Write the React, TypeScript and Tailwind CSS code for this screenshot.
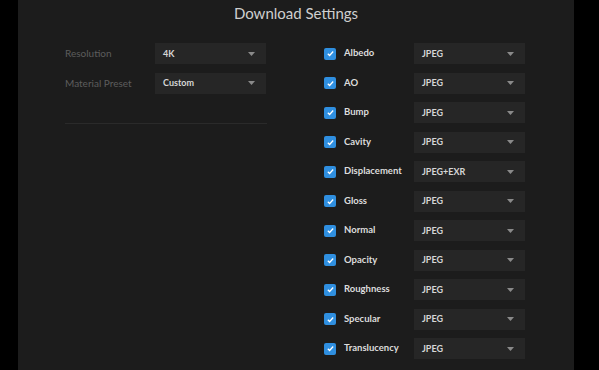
import React from "react";

const maps = [
  ["Albedo", "JPEG"],
  ["AO", "JPEG"],
  ["Bump", "JPEG"],
  ["Cavity", "JPEG"],
  ["Displacement", "JPEG+EXR"],
  ["Gloss", "JPEG"],
  ["Normal", "JPEG"],
  ["Opacity", "JPEG"],
  ["Roughness", "JPEG"],
  ["Specular", "JPEG"],
  ["Translucency", "JPEG"],
];

function Select({ value }: { value: string }) {
  return (
    <div className="flex h-[21px] w-[111px] items-center justify-between bg-[#262626] pl-[8px] pr-[11px]">
      <span className="text-[9px] font-bold text-[#d6d6d6]">{value}</span>
      <svg width="7" height="4" viewBox="0 0 7 4">
        <path d="M0 0h7L3.5 4z" fill="#8a8a8a" />
      </svg>
    </div>
  );
}

function Check() {
  return (
    <div className="flex h-[12px] w-[12px] items-center justify-center rounded-[2px] bg-[#2f8fe0]">
      <svg width="9" height="9" viewBox="0 0 10 10">
        <path d="M2 5.2l2 2 4-4.4" stroke="white" strokeWidth="1.4" fill="none" />
      </svg>
    </div>
  );
}

export default function App() {
  return (
    <div className="flex h-[370px] w-[599px] overflow-hidden bg-black" style={{ fontFamily: "Lato, 'Noto Sans', sans-serif" }}>
      <div className="ml-[18px] h-full w-[556px] bg-[#1c1c1c]">
        <h1 className="pt-[1px] text-center text-[15px] leading-[24px] text-[#cfcfcf]">Download Settings</h1>

        <div className="mt-[18px] flex">
          <div className="ml-[47px] w-[202px]">
            <div className="flex flex-col gap-[8.5px]">
              <div className="flex h-[21px] items-center">
                <span className="w-[90px] text-[10px] text-[#5c5c5c]">Resolution</span>
                <Select value="4K" />
              </div>
              <div className="flex h-[21px] items-center">
                <span className="w-[90px] text-[10px] text-[#5c5c5c]">Material Preset</span>
                <Select value="Custom" />
              </div>
            </div>
            <div className="mt-[29px] h-px w-[202px] bg-[#2a2a2a]" />
          </div>

          <div className="ml-[57px] flex flex-col gap-[8.5px]">
            {maps.map(([name, fmt]) => (
              <div key={name} className="flex h-[21px] items-center">
                <Check />
                <span className="ml-[8px] w-[70px] text-[9.5px] font-bold text-[#dcdcdc]">{name}</span>
                <Select value={fmt} />
              </div>
            ))}
          </div>
        </div>
      </div>
    </div>
  );
}
